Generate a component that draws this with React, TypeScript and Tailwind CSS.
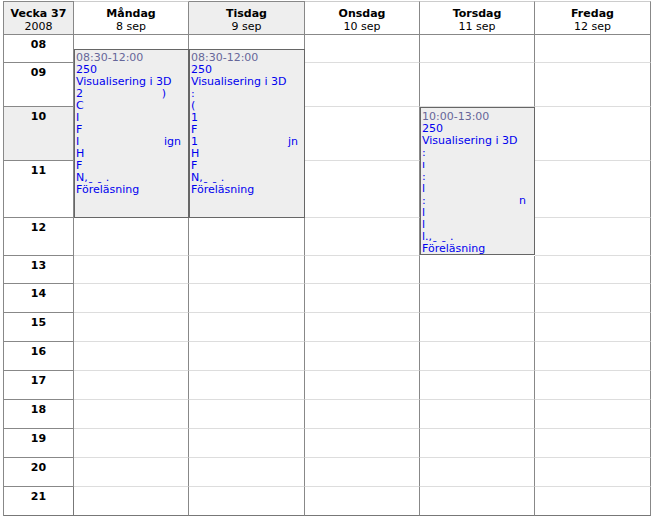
import React from 'react';

type Line = { left: string; right?: string; pr?: string };

const monLines: Line[] = [
  { left: '2', right: ')', pr: 'pr-[22px]' },
  { left: 'C' },
  { left: 'I' },
  { left: 'F' },
  { left: 'I', right: 'ign', pr: 'pr-[7px]' },
  { left: 'H' },
  { left: 'F' },
  { left: 'N,ˍ ˍ .' },
];

const tueLines: Line[] = [
  { left: ':' },
  { left: '(' },
  { left: '1' },
  { left: 'F' },
  { left: '1', right: 'jn', pr: 'pr-[6px]' },
  { left: 'H' },
  { left: 'F' },
  { left: 'N,ˍ ˍ .' },
];

const thuLines: Line[] = [
  { left: ':' },
  { left: 'ı' },
  { left: ':' },
  { left: 'l' },
  { left: ':', right: 'n', pr: 'pr-[8px]' },
  { left: 'l' },
  { left: 'l' },
  { left: 'l.,ˍ ˍ .' },
];

function EventBody({ time, lines }: { time: string; lines: Line[] }) {
  return (
    <>
      <div className="text-[#666699]">{time}</div>
      <div>250</div>
      <div className="whitespace-nowrap">Visualisering i 3D</div>
      {lines.map((l, i) => (
        <div key={i} className="flex whitespace-nowrap">
          <span>{l.left}</span>
          {l.right && <span className={`ml-auto ${l.pr}`}>{l.right}</span>}
        </div>
      ))}
      <div>Föreläsning</div>
    </>
  );
}

function Event({ time, lines }: { time: string; lines: Line[] }) {
  return (
    <div className="row-span-4 bg-[#eeeeee] border border-[#666666] pt-[2px] pl-[1px] text-[11px] leading-[12px] text-[#0000ee] overflow-hidden">
      <EventBody time={time} lines={lines} />
    </div>
  );
}

const days = [
  { name: 'Måndag', date: '8 sep', today: false },
  { name: 'Tisdag', date: '9 sep', today: true },
  { name: 'Onsdag', date: '10 sep', today: false },
  { name: 'Torsdag', date: '11 sep', today: false },
  { name: 'Fredag', date: '12 sep', today: false },
];

const laterHours = ['13', '14', '15', '16', '17', '18', '19', '20', '21'];

function HourCell({ h, span2, gray, last }: { h: string; span2?: boolean; gray?: boolean; last?: boolean }) {
  return (
    <div
      className={`${span2 ? 'row-span-2' : ''} ${gray ? 'bg-[#eeeeee]' : 'bg-white'} border-r border-b ${last ? 'border-[#777]' : 'border-[#888]'} pt-[3px] text-center text-[11px] leading-[13px] font-bold text-black`}
    >
      {h}
    </div>
  );
}

function DayCell({ span2, last, thin }: { span2?: boolean; last?: boolean; thin?: boolean }) {
  return (
    <div
      className={`${span2 ? 'row-span-2' : ''} bg-white border-r border-r-[#888] ${thin ? '' : 'border-b'} ${last ? 'border-b-[#777]' : 'border-b-[#dddddd]'}`}
    />
  );
}

export default function App() {
  return (
    <div className="min-h-screen bg-white pl-[3px] pt-[1px]" style={{ fontFamily: '"DejaVu Sans", Verdana, sans-serif' }}>
      <div className="grid w-[648px] grid-cols-[70px_115px_116px_115px_115px_116px] grid-rows-[34px_14px_14px_44px_54px_57px_38px_28px_repeat(8,29px)] border-l border-[#888]">
        {/* header */}
        <div className="bg-[#eeeeee] border-t border-r border-b border-[#888] pt-[5px] text-center text-[11px] leading-[13px] text-black">
          <div className="font-bold">Vecka 37</div>
          <div>2008</div>
        </div>
        {days.map((d) => (
          <div
            key={d.name}
            className={`${d.today ? 'bg-[#eeeeee] border-t-[#888]' : 'bg-white border-t-[#cccccc]'} border-t border-r border-b border-r-[#888] border-b-[#888] pt-[5px] text-center text-[11px] leading-[13px] text-black`}
          >
            <div className="font-bold">{d.name}</div>
            <div>{d.date}</div>
          </div>
        ))}

        {/* 08 */}
        <HourCell h="08" span2 />
        <DayCell thin />
        <DayCell thin />
        <DayCell span2 />
        <DayCell span2 />
        <DayCell span2 />

        {/* 08:30 */}
        <Event time="08:30-12:00" lines={monLines} />
        <Event time="08:30-12:00" lines={tueLines} />

        {/* 09 */}
        <HourCell h="09" />
        <DayCell />
        <DayCell />
        <DayCell />

        {/* 10 */}
        <HourCell h="10" gray />
        <DayCell />
        <div className="row-span-3 -mb-[2px]">
          <div className="h-[148px] bg-[#eeeeee] border border-[#666666] pt-[3px] pl-[1px] text-[11px] leading-[12px] text-[#0000ee] overflow-hidden">
            <EventBody time="10:00-13:00" lines={thuLines} />
          </div>
        </div>
        <DayCell />

        {/* 11 */}
        <HourCell h="11" />
        <DayCell />
        <DayCell />

        {/* 12 */}
        <HourCell h="12" />
        <DayCell />
        <DayCell />
        <DayCell />
        <DayCell />

        {laterHours.map((h, i) => {
          const last = i === laterHours.length - 1;
          return (
            <React.Fragment key={h}>
              <HourCell h={h} last={last} />
              <DayCell last={last} />
              <DayCell last={last} />
              <DayCell last={last} />
              <DayCell last={last} />
              <DayCell last={last} />
            </React.Fragment>
          );
        })}
      </div>
    </div>
  );
}
